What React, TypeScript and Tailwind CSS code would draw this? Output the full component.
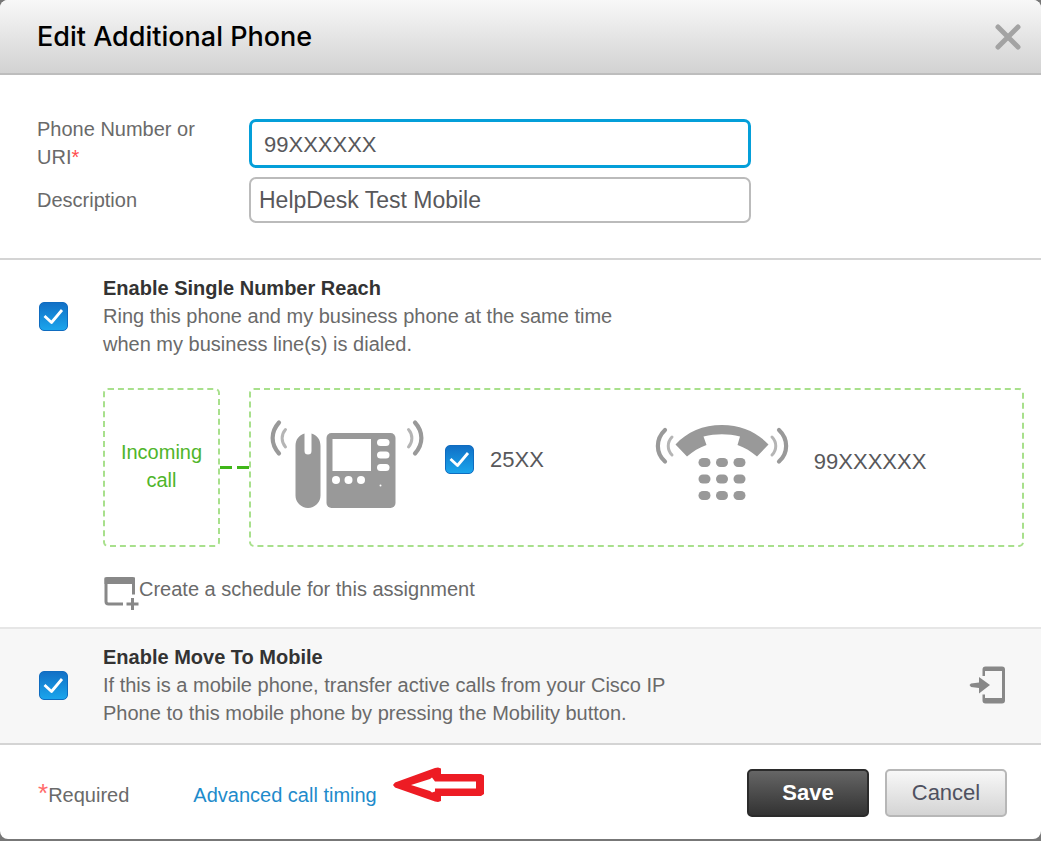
import React, { useState } from "react";

type CheckBoxProps = {
  id: string;
};

function CheckBox({ id }: CheckBoxProps) {
  const [checked, setChecked] = useState(true);

  return (
    <span className="relative block h-[29px] w-[29px] shrink-0">
      <input
        id={id}
        type="checkbox"
        checked={checked}
        onChange={(e) => setChecked(e.target.checked)}
        className="peer block h-full w-full appearance-none rounded-[5px] border border-gray-400 bg-white checked:border-[#0f6cc0] checked:bg-linear-to-b checked:from-[#1270c6] checked:to-[#1ba5ec]"
      />
      <svg
        viewBox="0 0 29 29"
        className="pointer-events-none absolute inset-0 hidden h-full w-full peer-checked:block"
        fill="none"
        stroke="#fff"
        strokeWidth="2.8"
      >
        <path d="M5.5 14 12.500 20.500 23 8" strokeLinejoin="round" />
      </svg>
    </span>
  );
}

function DeskPhoneIcon() {
  return (
    <svg width="154" height="90" viewBox="0 0 154 90" className="shrink-0" fill="none">
      <g stroke="#999" strokeLinecap="round">
        <path d="M9 3.5C.5 13 .5 25 9 34.500" strokeWidth="4.200" />
        <path d="M15.500 10.500C11 15.500 11 23 15.500 28" stroke="#b5b5b5" strokeWidth="3" />
        <path d="M145 3.500C153.500 13 153.500 25 145 34.500" strokeWidth="4.200" />
        <path d="M138.500 10.500C143 15.500 143 23 138.500 28" stroke="#b5b5b5" strokeWidth="3" />
      </g>
      <path
        d="M34.500 14.500C29 16 25.500 20.500 25.500 27V76.500a12.500 12.500 0 0 0 25 0V27C50.500 20.500 47 16 41.500 14.500V32a3.500 3.500 0 0 1-7 0Z"
        fill="#999"
      />
      <rect x="56.500" y="14" width="69" height="75" rx="5" fill="#999" />
      <g fill="#fff">
        <rect x="62.500" y="20" width="38.500" height="32" />
        <rect x="107" y="20" width="12.500" height="7" rx="3.500" />
        <rect x="107" y="32.500" width="12.500" height="7" rx="3.500" />
        <rect x="107" y="45" width="12.500" height="7" rx="3.500" />
        <circle cx="66" cy="61" r="4" />
        <circle cx="78.500" cy="61" r="4" />
        <circle cx="91" cy="61" r="4" />
        <circle cx="110.500" cy="66.500" r="1" />
      </g>
    </svg>
  );
}

function HandsetIcon() {
  return (
    <svg width="134" height="78" viewBox="0 0 134 78" className="shrink-0" fill="none">
      <g stroke="#999" strokeLinecap="round">
        <path d="M10 7C.5 16 .5 30 10 38.500" strokeWidth="4.200" />
        <path d="M17 14C12 19 12 27 17 32" stroke="#b5b5b5" strokeWidth="3" />
        <path d="M124 7C133.500 16 133.500 30 124 38.500" strokeWidth="4.200" />
        <path d="M117 14C122 19 122 27 117 32" stroke="#b5b5b5" strokeWidth="3" />
      </g>
      <path
        d="M20.500 21.500C32 9 48 2 67 2S102 9 113.500 21.500L102 33.500C96 28.500 90 24.500 82.500 22L85 13.500C73 10.500 61 10.500 48.500 13.500L51.500 22C44 24.500 38 28.500 32 33.500Z"
        fill="#999"
      />
      <g fill="#999">
        {[35, 51.5, 68].map((y) =>
          [43.5, 61, 78.5].map((x) => (
            <rect key={`${x}-${y}`} x={x} y={y} width="12" height="9" rx="4.500" />
          ))
        )}
      </g>
    </svg>
  );
}

function ScheduleIcon() {
  return (
    <svg width="36" height="36" viewBox="0 0 36 36" className="shrink-0" fill="none">
      <path d="M20 29H5.500A2.500 2.500 0 0 1 3 26.500V4H30.500V19.500" stroke="#888" strokeWidth="3" />
      <path d="M1.500 9V4.500A2.500 2.500 0 0 1 4 2H29.500A2.500 2.500 0 0 1 32 4.500V9Z" fill="#888" />
      <path d="M23.500 29H35.500M29.500 23V35" stroke="#888" strokeWidth="3" />
    </svg>
  );
}

function MoveToMobileIcon() {
  return (
    <svg width="38" height="38" viewBox="0 0 38 38" className="shrink-0">
      <path
        d="M13.500 10V3.500a3 3 0 0 1 3-3H33a3 3 0 0 1 3 3v31a3 3 0 0 1-3 3H16.500a3 3 0 0 1-3-3V28.500H16V32H33V5H16V10Z"
        fill="#888"
      />
      <path d="M.5 19 2 17.500 10 16.500V11L21 19 10 27.500V22L2 21Z" fill="#888" />
    </svg>
  );
}

export default function App() {
  const [phone, setPhone] = useState("99XXXXXX");
  const [description, setDescription] = useState("HelpDesk Test Mobile");

  return (
    <div className="min-h-screen bg-[#777] pb-[2px] font-['Liberation_Sans',Arial,sans-serif] text-[20px] leading-[28px] text-[#6a6a6a]">
      <form className="overflow-hidden rounded-lg bg-white" onSubmit={(e) => e.preventDefault()}>
        <header className="flex h-[75px] items-center justify-between border-b-2 border-[#bdbdbd] bg-linear-to-b from-[#f8f8f8] to-[#d2d2d2] pr-5 pl-[37px]">
          <h1 className="font-[Inter,sans-serif] text-[27px] font-medium text-black">Edit Additional Phone</h1>
          <button type="button" aria-label="Close">
            <svg width="26" height="26" viewBox="0 0 26 26" stroke="#a3a3a3" strokeWidth="5" strokeLinecap="round">
              <path d="M3 3 23 23M23 3 3 23" />
            </svg>
          </button>
        </header>

        <section className="flex flex-col gap-[6px] border-b-2 border-[#d4d4d4] pt-10 pr-5 pb-[35px] pl-[37px]">
          <div className="flex items-center">
            <label htmlFor="phone" className="w-[212px] shrink-0 pr-8">
              <span className="block">Phone Number or</span>
              <span className="flex">
                <span>URI</span>
                <span className="text-[#ff4d4d]">*</span>
              </span>
            </label>
            <input
              id="phone"
              value={phone}
              onChange={(e) => setPhone(e.target.value)}
              className="h-[49px] w-full max-w-[502px] rounded-[7px] border-3 border-[#049fd9] bg-white px-3 pt-1 text-[22px] text-[#58585b] outline-none"
            />
          </div>
          <div className="flex items-center">
            <label htmlFor="description" className="w-[212px] shrink-0">
              Description
            </label>
            <input
              id="description"
              value={description}
              onChange={(e) => setDescription(e.target.value)}
              className="h-[46px] w-full max-w-[502px] rounded-[7px] border-2 border-[#bbb] bg-white px-2 text-[23px] text-[#58585b] outline-none"
            />
          </div>
        </section>

        <section className="border-b-2 border-[#e6e6e6] pt-[14px] pr-[17px] pb-4 pl-[39px]">
          <div className="flex items-center gap-[35px]">
            <CheckBox id="snr" />
            <div className="max-w-[540px]">
              <label htmlFor="snr" className="block font-bold text-[#333]">
                Enable Single Number Reach
              </label>
              <p>Ring this phone and my business phone at the same time when my business line(s) is dialed.</p>
            </div>
          </div>

          <div className="mt-[30px] ml-16 flex h-[159px] items-stretch">
            <div className="flex w-[117px] shrink-0 items-center justify-center rounded-[5px] border-2 border-dashed border-[#a8e08c] px-3 pb-1 text-center text-[#4fb52a]">
              Incoming call
            </div>
            <div className="flex w-[29px] shrink-0 justify-between self-center">
              <span className="h-[3px] w-3 bg-[#3fb618]" />
              <span className="h-[3px] w-3 bg-[#3fb618]" />
            </div>
            <div className="flex flex-1 items-center rounded-[5px] border-2 border-dashed border-[#a8e08c] pb-2 pl-[19px] text-[22px] text-[#58585b]">
              <DeskPhoneIcon />
              <div className="ml-[21px] flex items-center gap-4 pb-2">
                <CheckBox id="line" />
                <label htmlFor="line">25XX</label>
              </div>
              <div className="ml-[111px] flex items-center gap-[25px] pb-1">
                <HandsetIcon />
                <span>99XXXXXX</span>
              </div>
            </div>
          </div>

          <button type="button" className="mt-7 ml-16 flex items-start">
            <ScheduleIcon />
            <span>Create a schedule for this assignment</span>
          </button>
        </section>

        <section className="flex items-center gap-[35px] border-b-2 border-[#d4d4d4] bg-[#f7f7f7] pt-[14px] pr-[34px] pb-4 pl-[39px]">
          <CheckBox id="mobile" />
          <div className="max-w-[600px]">
            <label htmlFor="mobile" className="block font-bold text-[#333]">
              Enable Move To Mobile
            </label>
            <p>
              If this is a mobile phone, transfer active calls from your Cisco IP Phone to this mobile phone by
              pressing the Mobility button.
            </p>
          </div>
          <span className="ml-auto">
            <MoveToMobileIcon />
          </span>
        </section>

        <footer className="flex items-center pt-[22px] pr-[34px] pb-5 pl-[38px]">
          <div className="flex items-center pt-1">
            <span className="flex">
              <span className="text-[26px] leading-[24px] text-[#ff6b6b]">*</span>Required
            </span>
            <a href="#timing" className="ml-[64px] text-[#1e8bcb]">
              Advanced call timing
            </a>
          </div>
          <svg width="91" height="36" viewBox="0 0 91 36" className="mb-4 ml-4 shrink-0">
            <path d="M0 18 2 15.500 42 1 45 .5 48 1.500V7H88L91 8.500V27L88 29H48V34L45 35 42 34.500 2 20.500Z" fill="#ed1c24" />
            <path d="M18 18 37 12 39 10.500 42 14.500H83V21.500H42V24.500L39 25.500 37 24Z" fill="#fff" />
          </svg>
          <div className="ml-auto flex gap-4">
            <button
              type="submit"
              className="h-12 w-[122px] rounded-[5px] border-2 border-[#2b2b2b] bg-linear-to-b from-[#666] to-[#333] text-[22px] font-bold text-white"
            >
              Save
            </button>
            <button
              type="button"
              className="h-12 w-[122px] rounded-[5px] border-2 border-[#b7b7b7] bg-linear-to-b from-[#f8f8f8] to-[#d4d4d4] text-[22px] text-[#4f5160]"
            >
              Cancel
            </button>
          </div>
        </footer>
      </form>
    </div>
  );
}
